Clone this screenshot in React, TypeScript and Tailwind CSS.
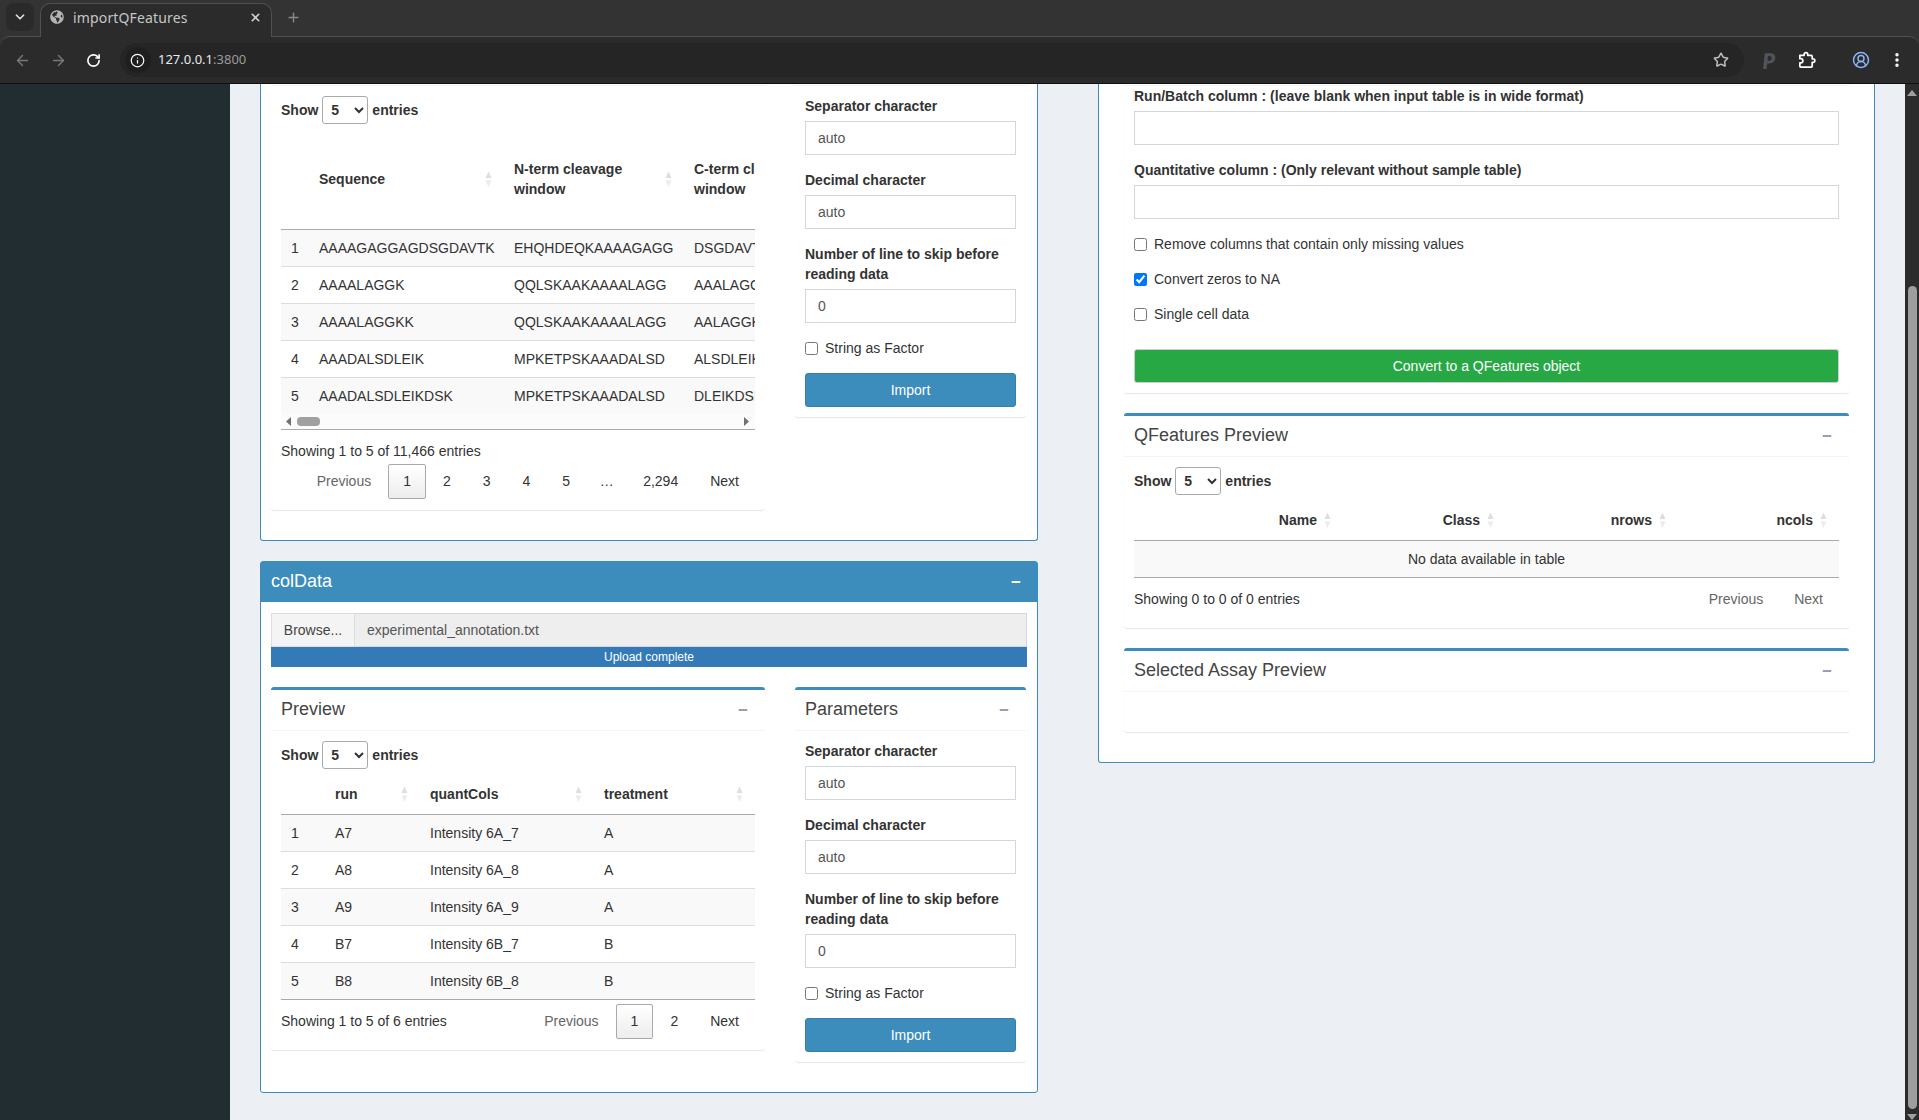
import type { ReactNode } from 'react'
import { ArrowLeft, ArrowRight, ChevronDown, EllipsisVertical, Info, Plus, RotateCw, Star, X, CircleUserRound } from 'lucide-react'
import { FaGlobeAmericas, FaMinus } from 'react-icons/fa'

type Col = { label: ReactNode; width: number; sortable?: boolean; right?: boolean }

const seqCols: Col[] = [
  { label: '', width: 28 },
  { label: 'Sequence', width: 195, sortable: true },
  { label: <>N-term cleavage<br />window</>, width: 180, sortable: true },
  { label: <>C-term cleavage<br />window</>, width: 180, sortable: true },
]

const seqRows = [
  ['1', 'AAAAGAGGAGDSGDAVTK', 'EHQHDEQKAAAAGAGG', 'DSGDAVTK'],
  ['2', 'AAAALAGGK', 'QQLSKAAKAAAALAGG', 'AAALAGGK'],
  ['3', 'AAAALAGGKK', 'QQLSKAAKAAAALAGG', 'AALAGGKK'],
  ['4', 'AAADALSDLEIK', 'MPKETPSKAAADALSD', 'ALSDLEIK'],
  ['5', 'AAADALSDLEIKDSK', 'MPKETPSKAAADALSD', 'DLEIKDSK'],
]

const annotCols: Col[] = [
  { label: '', width: 44 },
  { label: 'run', width: 95, sortable: true },
  { label: 'quantCols', width: 174, sortable: true },
  { label: 'treatment', width: 161, sortable: true },
]

const annotRows = [
  ['1', 'A7', 'Intensity 6A_7', 'A'],
  ['2', 'A8', 'Intensity 6A_8', 'A'],
  ['3', 'A9', 'Intensity 6A_9', 'A'],
  ['4', 'B7', 'Intensity 6B_7', 'B'],
  ['5', 'B8', 'Intensity 6B_8', 'B'],
]

const qfCols: Col[] = [
  { label: 'Name', width: 209, sortable: true, right: true },
  { label: 'Class', width: 163, sortable: true, right: true },
  { label: 'nrows', width: 172, sortable: true, right: true },
  { label: 'ncols', width: 161, sortable: true, right: true },
]

function SortIcon() {
  return (
    <svg viewBox="0 0 7 16" className="absolute right-[12px] top-1/2 h-[16px] w-[7px] -translate-y-1/2">
      <path d="M3.5 0.5 L6.5 7 H0.5 Z" fill="#dedede" />
      <path d="M0.5 9.5 H6.5 L3.5 16 Z" fill="#ececec" />
    </svg>
  )
}

function ShowEntries() {
  return (
    <div className="flex h-[28px] items-center text-[14px] font-bold">
      <span>Show</span>
      <select className="ml-[4px] mr-[4px] h-[28px] w-[46px] rounded-[3px] border border-[#aaa] bg-white pl-[4px] text-[14px] font-bold" defaultValue="5">
        <option value="5">5</option>
      </select>
      <span>entries</span>
    </div>
  )
}

function DataTable({ cols, rows, headH, empty, noLastBorder }: { cols: Col[]; rows: string[][]; headH: number; empty?: boolean; noLastBorder?: boolean }) {
  const total = cols.reduce((s, c) => s + c.width, 0)
  return (
    <table className="table-fixed border-separate border-spacing-0 text-[14px]" style={{ width: total }}>
      <colgroup>
        {cols.map((c, i) => (
          <col key={i} style={{ width: c.width }} />
        ))}
      </colgroup>
      <thead>
        <tr style={{ height: headH }}>
          {cols.map((c, i) => (
            <th
              key={i}
              className={`relative border-b border-[#aaa] py-0 pl-[10px] pr-[26px] align-middle font-bold leading-[20px] ${c.right ? 'text-right' : 'text-left'}`}
            >
              {c.label}
              {c.sortable && <SortIcon />}
            </th>
          ))}
        </tr>
      </thead>
      <tbody>
        {empty ? (
          <tr className="bg-[#f9f9f9]">
            <td colSpan={cols.length} className="h-[37px] border-b border-[#aaa] py-0 text-center leading-[20px]">
              No data available in table
            </td>
          </tr>
        ) : (
          rows.map((row, r) => {
            const last = r === rows.length - 1
            return (
              <tr key={r} className={r % 2 === 0 ? 'bg-[#f9f9f9]' : 'bg-white'}>
                {row.map((cell, i) => (
                  <td
                    key={i}
                    className={`whitespace-nowrap px-[10px] py-0 leading-[20px] ${
                      last && noLastBorder ? 'h-[36px]' : 'h-[37px] border-b'
                    } ${last ? 'border-[#aaa]' : 'border-[#ddd]'}`}
                  >
                    {cell}
                  </td>
                ))}
              </tr>
            )
          })
        )}
      </tbody>
    </table>
  )
}

function Pager({ pages }: { pages: string[] }) {
  return (
    <div className="flex items-center justify-end text-[14px]">
      <span className="border border-transparent pl-[15px] pr-[14px] leading-[33px] text-[#666]">Previous</span>
      {pages.map((p, i) =>
        p === '…' ? (
          <span key={i} className="ml-[2px] px-[12.5px] leading-[33px]">…</span>
        ) : (
          <span
            key={i}
            className={`ml-[2px] rounded-[2px] border px-[14px] leading-[33px] ${
              i === 0 ? 'border-[#aaa] bg-gradient-to-b from-white to-[#ededed]' : 'border-transparent'
            }`}
          >
            {p}
          </span>
        ),
      )}
      <span className="ml-[2px] border border-transparent pl-[14px] pr-[15px] leading-[33px]">Next</span>
    </div>
  )
}

function Field({ label, value }: { label: ReactNode; value?: string }) {
  return (
    <div className="mb-[15px]">
      <label className="mb-[5px] block text-[14px] font-bold leading-[20px]">{label}</label>
      <input
        type="text"
        defaultValue={value}
        className="block h-[34px] w-full border border-[#d2d6de] bg-white px-[12px] text-[14px] text-[#555] outline-none"
      />
    </div>
  )
}

function Check({ label, checked, className }: { label: string; checked?: boolean; className?: string }) {
  return (
    <label className={`flex h-[20px] items-center text-[14px] ${className ?? ''}`}>
      <input type="checkbox" defaultChecked={checked} className="mr-[7px] h-[13px] w-[13px] rounded-[2px]" />
      {label}
    </label>
  )
}

function Box({ title, cut, className, children }: { title?: string; cut?: boolean; className?: string; children: ReactNode }) {
  return (
    <div className={`rounded-b-[3px] bg-white shadow-[0_1px_1px_rgba(0,0,0,0.1)] ${cut ? '' : 'rounded-t-[3px] border-t-[3px] border-[#3c8dbc]'} ${className ?? ''}`}>
      {title ? (
        <div className="flex h-[41px] items-center justify-between border-b border-[#f4f4f4] pl-[10px] pr-[17px]">
          <h3 className="pb-[2px] text-[18px] leading-none text-[#444]">{title}</h3>
          <FaMinus className="h-[10px] w-[10px] text-[#97a0b3]" />
        </div>
      ) : (
        cut && <div className="mt-[1px] border-b border-[#f4f4f4]" />
      )}
      {children}
    </div>
  )
}

function ImportParams() {
  return (
    <div className="px-[10px] pb-[10px] pt-[10px]">
      <Field label="Separator character" value="auto" />
      <Field label="Decimal character" value="auto" />
      <Field label={<>Number of line to skip before<br />reading data</>} value="0" />
      <Check label="String as Factor" className="mb-[15px]" />
      <button className="h-[34px] w-full rounded-[3px] border border-[#367fa9] bg-[#3c8dbc] text-[14px] text-white">Import</button>
    </div>
  )
}

function BrowserChrome() {
  return (
    <div className="h-[84px] shrink-0 bg-[#333] [font-family:'Noto_Sans',sans-serif]">
      <div className="flex h-[36px] items-end pl-[6px]">
        <div className="mb-[5px] flex h-[28px] w-[28px] items-center justify-center rounded-[8px] bg-[#2a2a2a]">
          <ChevronDown className="h-[14px] w-[14px] text-[#ddd]" strokeWidth={3} />
        </div>
        <div className="relative z-10 -mb-[1px] ml-[6px] flex h-[34px] w-[232px] items-center rounded-t-[10px] border border-b-0 border-[#505050] bg-[#2b2b2b] pb-[7px] pl-[9px] pr-[9px]">
          <FaGlobeAmericas className="h-[14px] w-[14px] text-[#b4b4b4]" />
          <span className="ml-[9px] flex-1 text-[14px] tracking-[0.15px] text-[#c4c7c5]">importQFeatures</span>
          <X className="h-[13px] w-[13px] text-[#d0d0d0]" strokeWidth={3} />
        </div>
        <Plus className="mb-[11px] ml-[14px] h-[15px] w-[15px] text-[#8a8a8a]" strokeWidth={2.2} />
      </div>
      <div className="flex h-[48px] items-center rounded-t-[10px] border-t border-b border-t-[#505050] border-b-[#101010] bg-[#2b2b2b] pl-[14px] pr-[13px]">
        <ArrowLeft className="h-[17px] w-[17px] text-[#787878]" strokeWidth={2} />
        <ArrowRight className="ml-[19px] h-[17px] w-[17px] text-[#787878]" strokeWidth={2} />
        <RotateCw className="ml-[19px] h-[15px] w-[15px] text-white" strokeWidth={2.6} />
        <div className="ml-[19px] flex h-[34px] w-[1626px] items-center rounded-full bg-[#252525] pl-[5px] pr-[15px]">
          <div className="flex h-[26px] w-[26px] items-center justify-center rounded-full bg-[#1f1f1f]">
            <Info className="h-[15px] w-[15px] text-white" strokeWidth={2} />
          </div>
          <span className="ml-[7px] flex-1 text-[13px] text-[#e8eaed]">
            127.0.0.1<span className="text-[#9a9a9a]">:3800</span>
          </span>
          <Star className="h-[16px] w-[16px] text-[#c0c0c0]" strokeWidth={2.2} />
        </div>
        <span className="ml-[17px] w-[16px] -skew-x-6 text-center text-[22px] font-bold leading-none text-[#50545a]">P</span>
        <svg viewBox="0 0 20 20" className="ml-[20px] h-[19px] w-[19px]" fill="none" stroke="#fff" strokeWidth="1.8" strokeLinejoin="round">
          <path d="M3 4.5 H7.5 V3.6 a1.9 1.9 0 0 1 3.8 0 V4.5 H15 a1 1 0 0 1 1 1 V8.2 H16.9 a1.9 1.9 0 0 1 0 3.8 H16 V16 a1 1 0 0 1 -1 1 H4 a1 1 0 0 1 -1 -1 V12.4 H4 a2.2 2.2 0 0 0 0 -4.4 H3 Z" />
        </svg>
        <CircleUserRound className="ml-[36px] h-[18px] w-[18px] text-[#8ab4f8]" strokeWidth={2} />
        <EllipsisVertical className="ml-[18px] h-[18px] w-[18px] text-white" strokeWidth={2.6} />
      </div>
    </div>
  )
}

function PageScrollbar() {
  return (
    <div className="flex w-[14px] shrink-0 flex-col items-center bg-[#2c2c2c] pt-[6px]">
      <svg viewBox="0 0 10 6" className="h-[6px] w-[10px]"><path d="M5 0 L10 6 H0 Z" fill="#a0a0a0" /></svg>
      <div className="mt-[190px] h-[823px] w-[9px] rounded-full bg-[#9e9e9e]" />
      <svg viewBox="0 0 10 6" className="mt-[5px] h-[6px] w-[10px]"><path d="M0 0 H10 L5 6 Z" fill="#a0a0a0" /></svg>
    </div>
  )
}

export default function App() {
  return (
    <div className="flex h-[1120px] w-[1919px] flex-col overflow-hidden text-[#333] [font-family:'Liberation_Sans',Arial,sans-serif]">
      <BrowserChrome />
      <div className="flex min-h-0 flex-1">
        <div className="w-[230px] shrink-0 bg-[#222d32]" />
        <div className="flex min-w-0 flex-1 items-start gap-[60px] bg-[#ecf0f5] px-[30px]">
          {/* left column */}
          <div className="flex w-[778px] shrink-0 flex-col gap-[20px]">
            <div className="rounded-b-[3px] border-x border-b border-[#3c8dbc] bg-white px-[10px] pb-[30px]">
              <div className="flex items-start gap-[30px]">
                <Box cut className="w-[494px]">
                  <div className="px-[10px] pb-[11px] pt-[10px]">
                    <ShowEntries />
                    <div className="mt-[5px] w-[474px] overflow-hidden">
                      <DataTable cols={seqCols} rows={seqRows} headH={101} noLastBorder />
                    </div>
                    <div className="flex h-[16px] w-[474px] items-center border-b border-[#aaa] bg-[#fbfbfb] pl-[5px] pr-[6px]">
                      <svg viewBox="0 0 5 9" className="h-[9px] w-[5px]"><path d="M5 0 V9 L0 4.5 Z" fill="#707070" /></svg>
                      <div className="ml-[6px] h-[9px] w-[23px] rounded-[4px] bg-[#a0a0a0]" />
                      <svg viewBox="0 0 5 9" className="ml-auto h-[9px] w-[5px]"><path d="M0 0 V9 L5 4.5 Z" fill="#707070" /></svg>
                    </div>
                    <div className="pt-[11px] text-[14px] leading-[20px]">Showing 1 to 5 of 11,466 entries</div>
                    <div className="mt-[3px]">
                      <Pager pages={['1', '2', '3', '4', '5', '…', '2,294']} />
                    </div>
                  </div>
                </Box>
                <Box cut className="w-[231px]">
                  <ImportParams />
                </Box>
              </div>
            </div>

            <div className="rounded-[3px] border border-[#3c8dbc] bg-white pb-[30px]">
              <div className="flex h-[40px] items-center justify-between bg-[#3c8dbc] pl-[10px] pr-[16px] text-white">
                <h3 className="pb-[2px] text-[18px] leading-none">colData</h3>
                <FaMinus className="h-[10px] w-[10px]" />
              </div>
              <div className="px-[10px] pt-[11px]">
                <div className="flex h-[34px] w-[756px] text-[14px]">
                  <span className="flex w-[84px] items-center justify-center border border-[#ddd] bg-[#f4f4f4] text-[#444]">Browse...</span>
                  <span className="flex flex-1 items-center border border-l-0 border-[#d2d6de] bg-[#eee] pl-[12px] text-[#555]">experimental_annotation.txt</span>
                </div>
                <div className="flex h-[20px] w-[756px] items-center justify-center bg-[#337ab7] text-[12px] text-white">Upload complete</div>
                <div className="mt-[20px] flex items-start gap-[30px]">
                  <Box title="Preview" className="w-[494px]">
                    <div className="px-[10px] pb-[11px] pt-[10px]">
                      <ShowEntries />
                      <div className="mt-[5px]">
                        <DataTable cols={annotCols} rows={annotRows} headH={41} />
                      </div>
                      <div className="flex items-start justify-between">
                        <div className="pt-[11px] text-[14px] leading-[20px]">Showing 1 to 5 of 6 entries</div>
                        <div className="mt-[4px]">
                          <Pager pages={['1', '2']} />
                        </div>
                      </div>
                    </div>
                  </Box>
                  <Box title="Parameters" className="w-[231px]">
                    <ImportParams />
                  </Box>
                </div>
              </div>
            </div>
          </div>

          {/* right column */}
          <div className="w-[777px] shrink-0 rounded-b-[3px] border-x border-b border-[#3c8dbc] bg-white px-[25px] pb-[30px]">
            <Box cut>
              <div className="px-[10px] pb-[10px]">
                <Field label="Run/Batch column : (leave blank when input table is in wide format)" />
                <Field label="Quantitative column : (Only relevant without sample table)" />
                <div className="flex flex-col gap-[15px]">
                  <Check label="Remove columns that contain only missing values" />
                  <Check label="Convert zeros to NA" checked />
                  <Check label="Single cell data" />
                </div>
                <button className="mt-[25px] h-[34px] w-full rounded-[3px] border border-[#ccc] bg-[#28a745] text-[14px] text-white">
                  Convert to a QFeatures object
                </button>
              </div>
            </Box>
            <Box title="QFeatures Preview" className="mt-[20px]">
              <div className="px-[10px] pb-[11px] pt-[10px]">
                <ShowEntries />
                <div className="mt-[5px]">
                  <DataTable cols={qfCols} rows={[]} headH={41} empty />
                </div>
                <div className="flex items-start justify-between">
                  <div className="pt-[11px] text-[14px] leading-[20px]">Showing 0 to 0 of 0 entries</div>
                  <div className="mt-[4px] flex text-[14px] text-[#666]">
                    <span className="border border-transparent pl-[15px] pr-[13px] leading-[33px]">Previous</span>
                    <span className="ml-[2px] border border-transparent pl-[14px] pr-[15px] leading-[33px]">Next</span>
                  </div>
                </div>
              </div>
            </Box>
            <Box title="Selected Assay Preview" className="mt-[20px]">
              <div className="h-[40px]" />
            </Box>
          </div>
        </div>
        <PageScrollbar />
      </div>
    </div>
  )
}
